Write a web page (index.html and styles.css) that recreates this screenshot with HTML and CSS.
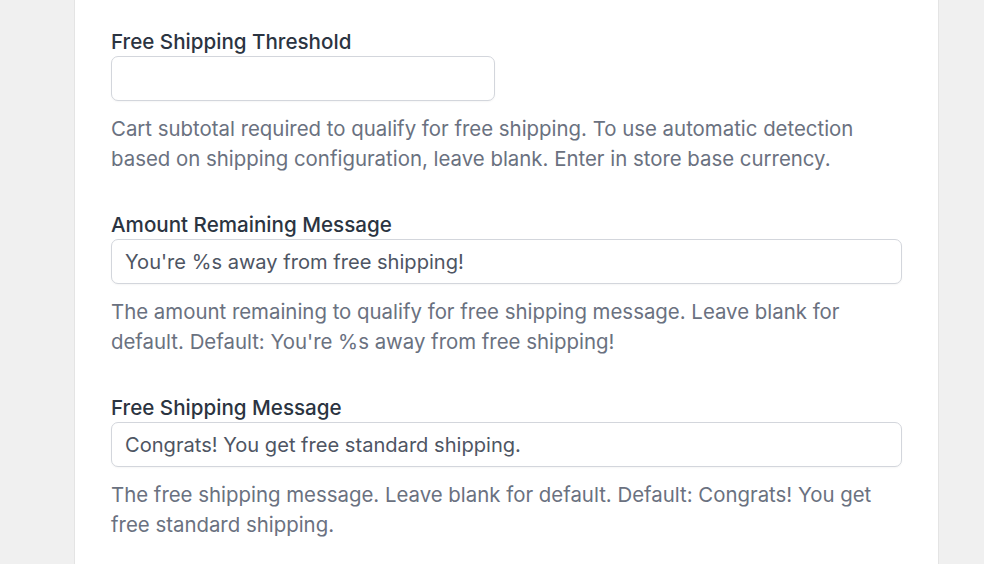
FILE: index.html
```html
<!DOCTYPE html>
<html lang="en">
<head>
<meta charset="utf-8">
<title>Free Shipping Settings</title>
<link rel="stylesheet" href="styles.css">
</head>
<body>
<div class="page">
  <div class="card">
    <div class="field">
      <label class="label" for="threshold">Free Shipping Threshold</label>
      <input class="input input-short" id="threshold" type="text" value="">
      <p class="help">Cart subtotal required to qualify for free shipping. To use automatic detection based on shipping configuration, leave blank. Enter in store base currency.</p>
    </div>
    <div class="field">
      <label class="label" for="remaining">Amount Remaining Message</label>
      <input class="input" id="remaining" type="text" value="You're %s away from free shipping!">
      <p class="help">The amount remaining to qualify for free shipping message. Leave blank for default. Default: You're %s away from free shipping!</p>
    </div>
    <div class="field">
      <label class="label" for="message">Free Shipping Message</label>
      <input class="input" id="message" type="text" value="Congrats! You get free standard shipping.">
      <p class="help">The free shipping message. Leave blank for default. Default: Congrats! You get free standard shipping.</p>
    </div>
  </div>
</div>
</body>
</html>
```
FILE: styles.css
```css
html, body {
  margin: 0;
  padding: 0;
  background: #f0f0f0;
  font-family: Inter, "Liberation Sans", sans-serif;
}

.page {
  padding-left: 74px;
  width: 865px;
  height: 564px;
  overflow: hidden;
}

.card {
  height: 100%;
  box-sizing: border-box;
  background: #ffffff;
  border-left: 1px solid #e4e4e4;
  border-right: 1px solid #e4e4e4;
  padding: 28px 35px 0 36px;
}

.field {
  display: flex;
  flex-direction: column;
  align-items: flex-start;
  margin-bottom: 37px;
}

.label {
  font-size: 20.6px;
  line-height: 28px;
  font-weight: 500;
  color: #2b3441;
}

.input {
  box-sizing: border-box;
  width: 791px;
  height: 45px;
  margin: 0;
  padding: 0 13px;
  border: 1px solid #d3d6dc;
  border-radius: 7px;
  background: #ffffff;
  font-family: inherit;
  font-size: 20.1px;
  color: #4e5563;
  box-shadow: 0 1px 2px rgba(0, 0, 0, 0.04);
  outline: none;
}

.input-short {
  width: 384px;
}

.help {
  margin: 13px 0 0 0;
  font-size: 20.4px;
  line-height: 30px;
  color: #6a7180;
  max-width: 791px;
}
```
